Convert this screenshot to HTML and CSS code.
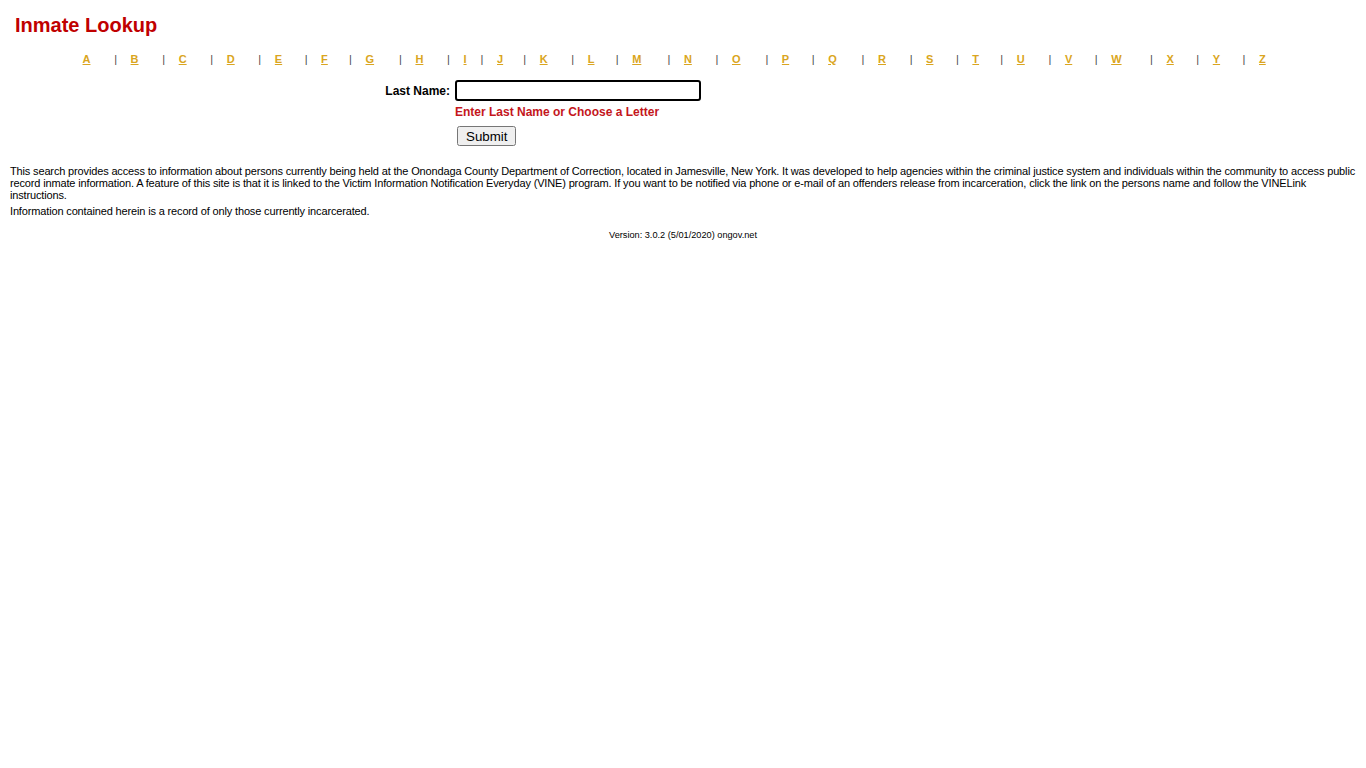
FILE: index.html
```html
<!DOCTYPE html>
<html>
<head>
<meta charset="utf-8">
<title>Inmate Lookup</title>
<link rel="stylesheet" href="styles.css">
</head>
<body>
<h1 class="title">Inmate Lookup</h1>
<table class="letters">
<tr>
<td><a href="#">A</a></td><td class="sep">|</td>
<td><a href="#">B</a></td><td class="sep">|</td>
<td><a href="#">C</a></td><td class="sep">|</td>
<td><a href="#">D</a></td><td class="sep">|</td>
<td><a href="#">E</a></td><td class="sep">|</td>
<td><a href="#">F</a></td><td class="sep">|</td>
<td><a href="#">G</a></td><td class="sep">|</td>
<td><a href="#">H</a></td><td class="sep">|</td>
<td><a href="#">I</a></td><td class="sep">|</td>
<td><a href="#">J</a></td><td class="sep">|</td>
<td><a href="#">K</a></td><td class="sep">|</td>
<td><a href="#">L</a></td><td class="sep">|</td>
<td><a href="#">M</a></td><td class="sep">|</td>
<td><a href="#">N</a></td><td class="sep">|</td>
<td><a href="#">O</a></td><td class="sep">|</td>
<td><a href="#">P</a></td><td class="sep">|</td>
<td><a href="#">Q</a></td><td class="sep">|</td>
<td><a href="#">R</a></td><td class="sep">|</td>
<td><a href="#">S</a></td><td class="sep">|</td>
<td><a href="#">T</a></td><td class="sep">|</td>
<td><a href="#">U</a></td><td class="sep">|</td>
<td><a href="#">V</a></td><td class="sep">|</td>
<td><a href="#">W</a></td><td class="sep">|</td>
<td><a href="#">X</a></td><td class="sep">|</td>
<td><a href="#">Y</a></td><td class="sep">|</td>
<td><a href="#">Z</a></td>
</tr>
</table>
<form class="search">
<label class="label" for="lastname">Last Name:</label>
<input class="field" id="lastname" type="text">
<div class="hint">Enter Last Name or Choose a Letter</div>
<div class="actions"><button class="submit" type="button">Submit</button></div>
</form>
<p class="about">This search provides access to information about persons currently being held at the Onondaga County Department of Correction, located in Jamesville, New York. It was developed to help agencies within the criminal justice system and individuals within the community to access public record inmate information. A feature of this site is that it is linked to the Victim Information Notification Everyday (VINE) program. If you want to be notified via phone or e-mail of an offenders release from incarceration, click the link on the persons name and follow the VINELink instructions.</p>
<p class="about">Information contained herein is a record of only those currently incarcerated.</p>
<div class="version">Version: 3.0.2 (5/01/2020) ongov.net</div>
</body>
</html>
```

FILE: styles.css
```css
body {
  margin: 8px;
  font-family: "Liberation Sans", Arial, sans-serif;
  color: #000;
  background: #fff;
}

.title {
  margin: 6px 0 0 7px;
  font-size: 20px;
  font-weight: bold;
  color: #c00000;
  line-height: 23px;
}

.letters {
  width: calc(90% - 8px);
  margin: 13px auto 0;
  border-spacing: 2px;
  font-size: 11px;
}

.letters td {
  padding: 1px;
  white-space: nowrap;
  text-align: left;
}

.letters a {
  color: #daa520;
  font-weight: bold;
  text-decoration: underline;
}

.letters .sep {
  color: #4a4a4a;
}

.search {
  display: grid;
  grid-template-columns: 442px auto;
  column-gap: 5px;
  justify-content: start;
  align-items: center;
  margin-top: 12px;
}

.label {
  grid-column: 1;
  justify-self: end;
  font-size: 12px;
  font-weight: bold;
}

.field {
  grid-column: 2;
  width: 246px;
  height: 21px;
  box-sizing: border-box;
  border: 2px solid #000;
  border-radius: 3px;
  padding: 1px 2px;
  margin: 0;
  font-family: "Liberation Sans", Arial, sans-serif;
  font-size: 13px;
}

.hint {
  grid-column: 2;
  margin-top: 4px;
  font-size: 12px;
  font-weight: bold;
  color: #c4161c;
}

.actions {
  grid-column: 2;
  margin-top: 7px;
  padding-left: 2px;
}

.submit {
  font-family: "Liberation Sans", Arial, sans-serif;
  font-size: 13.33px;
  height: 20px;
  padding: 0 7px;
  margin: 0;
}

.about {
  margin: 19px 2px 0;
  font-size: 11px;
  line-height: 12px;
  letter-spacing: -0.15px;
}

.about + .about {
  margin-top: 4px;
}

.version {
  margin-top: 13px;
  text-align: center;
  font-size: 9.2px;
}
```
